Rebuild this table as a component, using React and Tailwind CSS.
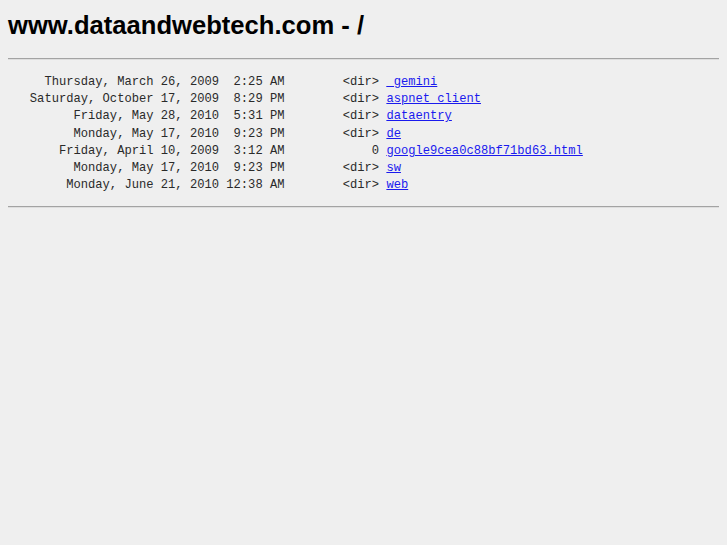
import React from "react";

const rows = [
  ["     Thursday, March 26, 2009  2:25 AM        <dir> ", "_gemini"],
  ["   Saturday, October 17, 2009  8:29 PM        <dir> ", "aspnet_client"],
  ["         Friday, May 28, 2010  5:31 PM        <dir> ", "dataentry"],
  ["         Monday, May 17, 2010  9:23 PM        <dir> ", "de"],
  ["       Friday, April 10, 2009  3:12 AM            0 ", "google9cea0c88bf71bd63.html"],
  ["         Monday, May 17, 2010  9:23 PM        <dir> ", "sw"],
  ["        Monday, June 21, 2010 12:38 AM        <dir> ", "web"],
];

export default function App() {
  return (
    <div className="min-h-[545px] w-full bg-[#efefef] px-2 pt-2 text-black">
      <h1 className="mt-[3px] font-['Liberation_Sans',Arial,sans-serif] text-[25.6px] font-bold leading-[28px] text-black">
        www.dataandwebtech.com - /
      </h1>
      <div className="mt-[19px] h-[2px] border-t border-b border-t-[#a3a3a3] border-b-[#dedede]" />
      <div className="mt-[14px] font-['Liberation_Mono','Courier_New',monospace] text-[12.13px] leading-[17.17px] text-[#2a2a2a]">
        {rows.map(([pre, link]) => (
          <div key={link} className="whitespace-pre">
            {pre}
            <a href="#" className="text-[#1a1aee] underline">
              {link}
            </a>
          </div>
        ))}
      </div>
      <div className="mt-[12px] h-[2px] border-t border-b border-t-[#a3a3a3] border-b-[#dedede]" />
    </div>
  );
}
